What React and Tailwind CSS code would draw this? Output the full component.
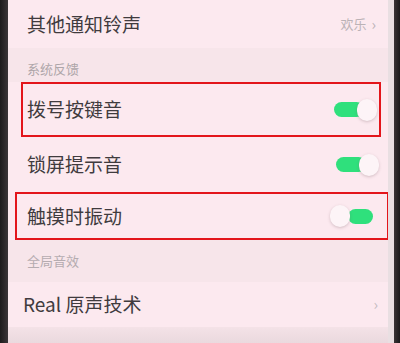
import React from 'react';

const font = { fontFamily: '"Noto Sans CJK SC", "Noto Sans", sans-serif' };

// Toggle as seen in the photo: green track, white knob
const Toggle = ({ knobLeft }) => (
  <div className="relative w-[43px] h-[22px] flex items-center">
    <div className={`h-[15px] bg-[#2fe07c] rounded-full ${knobLeft ? 'ml-[18px] w-[25px]' : 'w-[30px]'}`} />
    <div
      className={`absolute top-0 w-[20px] h-[22px] rounded-full bg-[#fdf4f7] shadow-[0_1px_3px_rgba(120,90,100,0.3)] ${knobLeft ? 'left-0' : 'right-0'}`}
    />
  </div>
);

const App = () => {
  return (
    <div className="flex w-[400px] h-[343px] overflow-hidden bg-[#fce9ef]" style={font}>
      {/* left bezel */}
      <div className="w-[8px] bg-gradient-to-r from-[#1d1b1c] to-[#3b3538]" />

      {/* screen */}
      <div className="flex-1 flex flex-col">
        <div className="h-[48px] flex items-center justify-between pl-[19px] pr-[12px]">
          <span className="text-[19px] text-[#403b3e]">其他通知铃声</span>
          <span className="text-[13px] text-[#bbb2b6] flex items-center gap-[5px]">
            欢乐<span className="text-[15px]">›</span>
          </span>
        </div>

        <div className="h-[34px] bg-[#f7e5ea] flex items-end pl-[19px] pb-[4px]">
          <span className="text-[13px] text-[#aea5a9]">系统反馈</span>
        </div>

        <div className="h-[55px] ml-[13px] mr-[7px] border-[2.5px] border-[#e3151b] flex items-center justify-between pl-[4px] pr-[2px]">
          <span className="text-[19px] text-[#403b3e]">拨号按键音</span>
          <Toggle />
        </div>

        <div className="h-[55px] flex items-center justify-between pl-[19px] pr-[9px]">
          <span className="text-[19px] text-[#403b3e]">锁屏提示音</span>
          <Toggle />
        </div>

        <div className="h-[48px] ml-[7px] mr-[-1px] border-[2.5px] border-[#e3151b] flex items-center justify-between pl-[10px] pr-[14px]">
          <span className="text-[19px] text-[#403b3e]">触摸时振动</span>
          <Toggle knobLeft />
        </div>

        <div className="h-[42px] bg-[#f7e5ea] flex items-center pl-[19px]">
          <span className="text-[13px] text-[#b5acb0]">全局音效</span>
        </div>

        <div className="h-[45px] flex items-center justify-between pl-[15px] pr-[10px]">
          <span className="text-[19px] text-[#403b3e]">Real 原声技术</span>
          <span className="text-[15px] text-[#c4bbbf]">›</span>
        </div>

        <div className="flex-1 bg-gradient-to-b from-[#f4e2e7] to-[#ead9de]" />
      </div>

      {/* right bezel */}
      <div className="w-[6px] bg-[#e9dfe2]" />
      <div className="w-[6px] bg-gradient-to-r from-[#3a3436] to-[#1b1a1b]" />
    </div>
  );
};

export default App;
